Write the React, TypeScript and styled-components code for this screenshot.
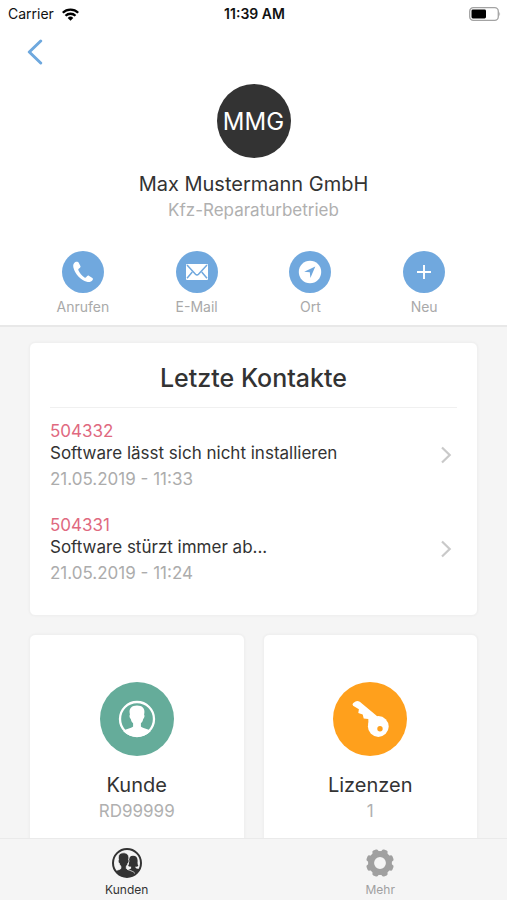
import React from "react";
import styled, { createGlobalStyle } from "styled-components";

const GlobalStyle = createGlobalStyle`
  *, *::before, *::after { box-sizing: border-box; }
  body {
    margin: 0;
    background: #f5f5f5;
    color: #333333;
    font-family: Inter, "Liberation Sans", sans-serif;
  }
  h1, h2, p, ul { margin: 0; padding: 0; }
  ul { list-style: none; }
`;

const Screen = styled.div`
  display: flex;
  flex-direction: column;
  height: 100vh;
`;

const StatusBar = styled.div`
  display: grid;
  grid-template-columns: 1fr auto 1fr;
  align-items: center;
  height: 28px;
  padding: 0 6px 0 8px;
  background: #ffffff;
  color: #111111;
  font-size: 14px;
  line-height: 20px;
`;

const Carrier = styled.span`
  display: flex;
  align-items: center;
  gap: 8px;
`;

const Clock = styled.span`
  font-weight: 600;
`;

const BatterySlot = styled.span`
  display: flex;
  justify-content: flex-end;
`;

const Header = styled.header`
  flex: none;
  padding: 0 26px 8px;
  background: #ffffff;
  border-bottom: 2px solid #e8e8e8;
`;

const BackButton = styled.button`
  display: flex;
  align-items: center;
  width: 32px;
  height: 48px;
  padding: 0;
  border: 0;
  background: none;
  cursor: pointer;
`;

const Profile = styled.div`
  display: flex;
  flex-direction: column;
  align-items: center;
  margin-top: 8px;
`;

const Disc = styled.span<{ $size: number; $color: string }>`
  display: flex;
  align-items: center;
  justify-content: center;
  width: ${(p) => p.$size}px;
  height: ${(p) => p.$size}px;
  border-radius: 50%;
  background: ${(p) => p.$color};
  color: #ffffff;
  font-size: 24px;
`;

const Name = styled.h1`
  margin-top: 14px;
  font-size: 20px;
  font-weight: 400;
  line-height: 24px;
`;

const Subtitle = styled.p`
  color: #b0b0b0;
  font-size: 17px;
  line-height: 28px;
`;

const Actions = styled.nav`
  display: grid;
  grid-template-columns: repeat(4, 1fr);
  margin-top: 27px;
`;

const Action = styled.button`
  display: flex;
  flex-direction: column;
  align-items: center;
  gap: 4px;
  padding: 0;
  border: 0;
  background: none;
  color: #a9a9a9;
  font-family: inherit;
  font-size: 14px;
  line-height: 20px;
  cursor: pointer;
`;

const Content = styled.main`
  flex: 1;
  min-height: 0;
  overflow-y: auto;
  scrollbar-width: none;
  padding: 15px 29px;
`;

const Card = styled.section`
  padding: 17px 20px;
  border-radius: 6px;
  background: #ffffff;
  border: 1px solid #f0f0f0;
  box-shadow: 0 0 2px #ebebeb;
`;

const ContactsCard = styled(Card)`
  padding-bottom: 19px;
`;

const CardTitle = styled.h2`
  padding-bottom: 11px;
  border-bottom: 1px solid #f0f0f0;
  font-size: 25px;
  font-weight: 500;
  line-height: 36px;
  text-align: center;
`;

const ContactLink = styled.a`
  display: flex;
  align-items: center;
  justify-content: space-between;
  height: 94px;
  padding-right: 5px;
  color: inherit;
  text-decoration: none;
`;

const ContactNumber = styled.p`
  color: #e0697f;
  font-size: 17px;
  line-height: 22px;
`;

const ContactSubject = styled.p`
  font-size: 17px;
  line-height: 22px;
`;

const ContactDate = styled.p`
  margin-top: 3px;
  color: #acacac;
  font-size: 17px;
  line-height: 24px;
`;

const Tiles = styled.div`
  display: grid;
  grid-template-columns: 1fr 1fr;
  gap: 18px;
  margin-top: 18px;
`;

const Tile = styled(Card)`
  display: flex;
  flex-direction: column;
  align-items: center;
  padding: 47px 16px 32px;
`;

const TileTitle = styled.h2`
  margin-top: 17px;
  font-size: 20px;
  font-weight: 400;
  line-height: 24px;
`;

const TabBar = styled.nav`
  display: grid;
  grid-template-columns: 1fr 1fr;
  flex: none;
  height: 62px;
  border-top: 1px solid #eaeaea;
  background: #f5f5f5;
`;

const Tab = styled.a<{ $active?: boolean }>`
  display: flex;
  flex-direction: column;
  align-items: center;
  gap: 2px;
  padding-top: 8px;
  color: ${(p) => (p.$active ? "#333333" : "#a0a0a0")};
  font-size: 12px;
  line-height: 18px;
  text-decoration: none;
`;

const WifiIcon = () => (
  <svg width="17" height="13" viewBox="0 0 17 13" aria-hidden="true">
    <g fill="none" stroke="#000" strokeWidth="2.3">
      <path d="M0.8 4.8a11 11 0 0 1 15.4 0" />
      <path d="M3.5 7.8a7.1 7.1 0 0 1 10 0" />
    </g>
    <path d="M5.7 9.9a4 4 0 0 1 5.6 0L8.5 12.7z" fill="#000" />
  </svg>
);

const BatteryIcon = () => (
  <svg width="32" height="14" viewBox="0 0 32 14" role="img" aria-label="Battery">
    <rect x="0.7" y="0.7" width="28.6" height="12.6" rx="3.6" fill="#fff" stroke="#a3a3a3" strokeWidth="1.3" />
    <rect x="2.5" y="2.5" width="14.5" height="9" rx="1.4" fill="#000" />
    <path d="M30.4 4.8q1.6 2.2 0 4.4z" fill="#a3a3a3" />
  </svg>
);

const BackIcon = () => (
  <svg width="18" height="26" viewBox="0 0 18 26" aria-hidden="true">
    <path d="M14.7 2L3.3 13l11.400 11" fill="none" stroke="#6ea8de" strokeWidth="3" strokeLinecap="round" strokeLinejoin="round" />
  </svg>
);

const ChevronIcon = () => (
  <svg width="12" height="18" viewBox="0 0 12 18" aria-hidden="true">
    <path d="M2 1.5L9.7 9 2 16.5" fill="none" stroke="#c9c9c9" strokeWidth="2.2" />
  </svg>
);

const PhoneIcon = () => (
  <svg width="22" height="22" viewBox="0 0 22 22" aria-hidden="true">
    <path
      d="M3.3 1.1C1.5 2 .8 4.2 1.4 6.4c1.6 6.5 7.3 12.4 13.4 14.4 2 .7 4.5.3 5.8-1.7.5-.8.5-1.5-.2-2l-3.2-2.2c-.7-.5-1.5-.4-2 .2l-1.1 1.2c-.5.5-1 .5-1.6.1-2.7-1.9-4.9-4.3-6.1-7.2-.3-.6-.2-1 .3-1.4l1.3-1.1c.5-.4.7-1 .4-1.700L6.700 1.700C6.200.5 4.400.5 3.300 1.100z"
      fill="#fff"
    />
  </svg>
);

const MailIcon = () => (
  <svg width="24" height="18" viewBox="0 0 24 18" aria-hidden="true">
    <rect x="1" y="1" width="22" height="16" rx="1" fill="#fff" />
    <g fill="none" stroke="#70a8de" strokeWidth="1.5">
      <path d="M2 2l8.5 9.3q1.5 1.5 3 0L22 2" />
      <path d="M2 15.3l5.3-6.2M22 15.3l-5.3-6.2" />
    </g>
  </svg>
);

const CompassIcon = () => (
  <svg width="24" height="24" viewBox="0 0 24 24" aria-hidden="true">
    <circle cx="12" cy="12" r="11.2" fill="#fff" />
    <path d="M17.3 6.5L6.2 11.7l5.6.6.6 5.7z" fill="#70a8de" />
  </svg>
);

const PlusIcon = () => (
  <svg width="16" height="16" viewBox="0 0 16 16" aria-hidden="true">
    <path d="M8 1v14M1 8h14" stroke="#fff" strokeWidth="1.9" />
  </svg>
);

const CustomerIcon = () => (
  <svg width="38" height="38" viewBox="0 0 38 38" aria-hidden="true">
    <circle cx="19" cy="19" r="17" fill="none" stroke="#fff" strokeWidth="2.3" />
    <path
      d="M19 5.5c-5.2 0-7.9 2.8-7.4 7l.3 2.3c-.8.4-.4 3.5.9 4.1.4 2.2 1.300 3.500 2.300 4.300v3.300c-.9 1.700-7 1.800-9.800 4.700C9 35 14 36.800 19 36.800S29 35 32.700 31.200c-2.800-2.900-8.900-3-9.800-4.700v-3.300c1-.8 1.900-2.100 2.300-4.300 1.300-.6 1.700-3.700.9-4.100l.3-2.300c.5-4.200-2.200-7-7.400-7z"
      fill="#fff"
    />
  </svg>
);

const KeyIcon = () => (
  <svg width="38" height="38" viewBox="0 0 38 38" aria-hidden="true">
    <g fill="#fff">
      <circle cx="27.3" cy="26.5" r="10.4" />
      <path d="M4.500 1.400Q6.700.6 8.800 1.800L26.500 16.600 17.500 25.500 17.300 19 12.700 18.600 11.700 14.500 7.300 13 7.900 9.200 2.100 5.800Q.8 4.200 2.300 3z" />
    </g>
    <circle cx="29" cy="28.8" r="2.7" fill="#ffa01c" />
  </svg>
);

const CustomersIcon = () => (
  <svg width="32" height="32" viewBox="0 0 32 32" aria-hidden="true">
    <defs>
      <clipPath id="customers-ring">
        <circle cx="16" cy="16" r="14" />
      </clipPath>
    </defs>
    <g clipPath="url(#customers-ring)" fill="#333">
      <path d="M22 8.8c-3.3 0-4.3 2.6-4 5.8.2 2-.3 3.3-.9 4.4 1 .6 2 .7 3 .6v1.8l-3 1.5 4.9 8.500 9-6v-2c-2-1.400-5.400-1.300-6.500-2.600v-1.200c1 .1 2 0 2.900-.6-.8-1.200-1-2.500-.8-4.400.3-3.500-1.100-5.800-4.600-5.800z" />
      <path
        d="M12.3 5.8c-3.600 0-5.300 2.300-4.900 5.500l.2 1.700c-.7.300-.4 2.600.6 3.100.3 1.600.9 2.500 1.700 3.100v2.200c-.8 1.600-6 1.600-8.400 4.100L8 32h14l2.500-4.500c-1.300-4.100-8-3.900-9.200-6.100v-2.200c.8-.6 1.400-1.500 1.700-3.100 1-.5 1.300-2.800.6-3.100l.2-1.700c.4-3.200-1.900-5.500-5.500-5.500z"
        stroke="#f5f5f5"
        strokeWidth=".8"
      />
    </g>
    <circle cx="16" cy="16" r="14" fill="none" stroke="#333" strokeWidth="2" />
  </svg>
);

const GearIcon = () => (
  <svg width="32" height="32" viewBox="0 0 32 32" aria-hidden="true">
    <circle cx="16" cy="16" r="8.9" fill="none" stroke="#a0a0a0" strokeWidth="6" />
    <g fill="#a0a0a0">
      {[22.5, 67.5, 112.5, 157.5, 202.5, 247.5, 292.5, 337.5].map((angle) => (
        <path
          key={angle}
          d="M11.500 7q1.300-1.500 1.400-3.200Q13.100 2 14.600 2h2.800q1.500 0 1.700 1.800Q19.200 5.500 20.500 7z"
          transform={`rotate(${angle} 16 16)`}
        />
      ))}
    </g>
  </svg>
);

const actions = [
  { label: "Anrufen", icon: <PhoneIcon /> },
  { label: "E-Mail", icon: <MailIcon /> },
  { label: "Ort", icon: <CompassIcon /> },
  { label: "Neu", icon: <PlusIcon /> },
];

const contacts = [
  { id: "504332", subject: "Software lässt sich nicht installieren", date: "21.05.2019 - 11:33" },
  { id: "504331", subject: "Software stürzt immer ab...", date: "21.05.2019 - 11:24" },
];

const tiles = [
  { title: "Kunde", value: "RD99999", color: "#65ac9a", icon: <CustomerIcon /> },
  { title: "Lizenzen", value: "1", color: "#ffa01c", icon: <KeyIcon /> },
];

export default function App() {
  return (
    <>
      <GlobalStyle />
      <Screen>
        <StatusBar>
          <Carrier>
            Carrier <WifiIcon />
          </Carrier>
          <Clock>11:39 AM</Clock>
          <BatterySlot>
            <BatteryIcon />
          </BatterySlot>
        </StatusBar>
        <Header>
          <BackButton type="button" aria-label="Zurück">
            <BackIcon />
          </BackButton>
          <Profile>
            <Disc $size={74} $color="#333333">MMG</Disc>
            <Name>Max Mustermann GmbH</Name>
            <Subtitle>Kfz-Reparaturbetrieb</Subtitle>
          </Profile>
          <Actions>
            {actions.map((a) => (
              <Action key={a.label} type="button">
                <Disc $size={42} $color="#70a8de">{a.icon}</Disc>
                {a.label}
              </Action>
            ))}
          </Actions>
        </Header>
        <Content>
          <ContactsCard>
            <CardTitle>Letzte Kontakte</CardTitle>
            <ul>
              {contacts.map((c) => (
                <li key={c.id}>
                  <ContactLink href={`#${c.id}`}>
                    <div>
                      <ContactNumber>{c.id}</ContactNumber>
                      <ContactSubject>{c.subject}</ContactSubject>
                      <ContactDate>{c.date}</ContactDate>
                    </div>
                    <ChevronIcon />
                  </ContactLink>
                </li>
              ))}
            </ul>
          </ContactsCard>
          <Tiles>
            {tiles.map((t) => (
              <Tile key={t.title}>
                <Disc $size={74} $color={t.color}>{t.icon}</Disc>
                <TileTitle>{t.title}</TileTitle>
                <Subtitle>{t.value}</Subtitle>
              </Tile>
            ))}
          </Tiles>
        </Content>
        <TabBar>
          <Tab href="#kunden" $active aria-current="page">
            <CustomersIcon />
            Kunden
          </Tab>
          <Tab href="#mehr">
            <GearIcon />
            Mehr
          </Tab>
        </TabBar>
      </Screen>
    </>
  );
}
